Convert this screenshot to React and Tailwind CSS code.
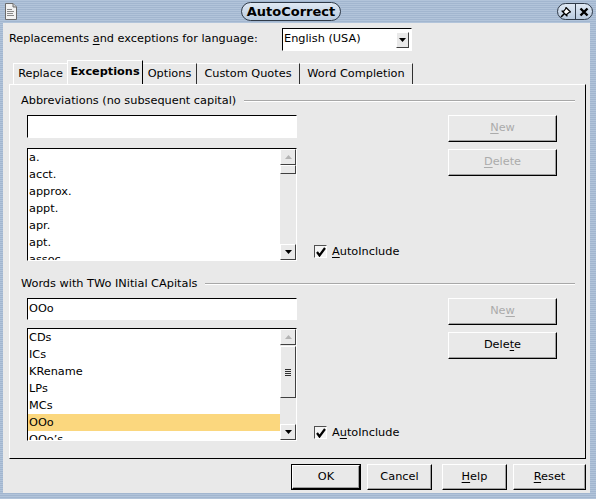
import React from 'react';

// Mnemonic letter, underlined like a Qt accelerator
function Mn({ children }) {
  return <span className="underline underline-offset-[2px] decoration-1">{children}</span>;
}

function Btn({ children, disabled, className = '' }) {
  return (
    <div
      className={`flex items-center justify-center border border-t-white border-l-white border-b-black border-r-black bg-[#e9e9e9] shadow-[inset_-1px_-1px_0_#a0a0a0] ${
        disabled ? 'text-[#ababab]' : 'text-black'
      } ${className}`}
    >
      {children}
    </div>
  );
}

function Arrow({ up, disabled }) {
  return (
    <svg width="7" height="4" viewBox="0 0 7 4">
      <path
        d={up ? 'M0 4 L3.5 0 L7 4 Z' : 'M0 0 L7 0 L3.5 4 Z'}
        fill={disabled ? '#b4b4b4' : '#000'}
      />
    </svg>
  );
}

function ScrollBtn({ up, disabled }) {
  return (
    <div className="h-[16px] shrink-0 flex items-center justify-center border border-t-white border-l-white border-b-[#404040] border-r-[#404040] bg-[#e9e9e9]">
      <Arrow up={up} disabled={disabled} />
    </div>
  );
}

function ListBox({ items, selected, before, thumb, grip }) {
  return (
    <div className="w-[270px] h-[113px] flex border border-t-black border-l-black border-b-white border-r-white bg-white overflow-hidden">
      <div className="flex-1 flex flex-col overflow-hidden">
        {items.map((it) => (
          <div
            key={it}
            className={`h-[17px] shrink-0 leading-[17px] pl-[1px] ${it === selected ? 'bg-[#fbd77e]' : ''}`}
          >
            {it}
          </div>
        ))}
      </div>
      <div className="w-[16px] flex flex-col bg-[#e9e9e9]">
        <ScrollBtn up disabled />
        <div style={{ height: before }} />
        <div
          style={{ height: thumb }}
          className="shrink-0 flex items-center justify-center border border-t-white border-l-white border-b-[#404040] border-r-[#404040]"
        >
          {grip && (
            <div className="flex flex-col gap-[1px]">
              <div className="w-[6px] h-px bg-[#303030]" />
              <div className="w-[6px] h-px bg-[#303030]" />
              <div className="w-[6px] h-px bg-[#303030]" />
              <div className="w-[6px] h-px bg-[#303030]" />
            </div>
          )}
        </div>
        <div className="flex-1" />
        <ScrollBtn />
      </div>
    </div>
  );
}

function Check({ label }) {
  return (
    <div className="flex items-center gap-[5px] h-[13px] leading-[13px]">
      <div className="w-[13px] h-[13px] border border-t-[#505050] border-l-[#505050] border-b-white border-r-white bg-[#f4f4f4] flex items-center justify-center">
        <svg width="10" height="10" viewBox="0 0 10 10">
          <path d="M1 5 L3.5 8.5 L9 1" fill="none" stroke="#000" strokeWidth="2.2" />
        </svg>
      </div>
      <span>{label}</span>
    </div>
  );
}

function Heading({ children }) {
  return (
    <div className="h-[16px] flex items-center ml-[11px] mr-[10px]">
      <span>{children}</span>
      <div className="flex-1 ml-[8px] border-t border-t-[#a8a8a8] border-b border-b-white" />
    </div>
  );
}

function Section({ title, value, items, selected, before, thumb, grip, newBtn, delBtn, delDisabled, check, mt, inputH, listMt, padB }) {
  return (
    <div className={mt}>
      <Heading>{title}</Heading>
      <div className="flex mt-[6px]">
        <div className="ml-[17px] w-[270px] flex flex-col">
          <div className={`${inputH} flex items-center border border-t-black border-l-black border-b-white border-r-white bg-white pl-[1px]`}>
            {value}
          </div>
          <div className={listMt}>
            <ListBox items={items} selected={selected} before={before} thumb={thumb} grip={grip} />
          </div>
        </div>
        <div className={`ml-[17px] w-[134px] flex flex-col justify-end ${padB}`}>
          <Check label={check} />
        </div>
        <div className="w-[109px] flex flex-col">
          <Btn disabled className="h-[27px]">{newBtn}</Btn>
          <Btn disabled={delDisabled} className="h-[27px] mt-[7px]">{delBtn}</Btn>
        </div>
      </div>
    </div>
  );
}

function TitleBar() {
  return (
    <div className="h-[23px] flex items-center px-[5px]">
      <svg width="12" height="17" viewBox="0 0 12 17">
        <path d="M0.5 0.5 H8 L11.5 4 V16.5 H0.5 Z" fill="#f2f2f2" stroke="#6b6b6b" />
        <path d="M8 0.5 V4 H11.5" fill="#d0d0d0" stroke="#6b6b6b" />
        <rect x="2" y="6" width="5" height="1" fill="#8a8a8a" />
        <rect x="2" y="8" width="7" height="1" fill="#8a8a8a" />
        <rect x="2" y="10" width="6" height="1" fill="#8a8a8a" />
        <rect x="2" y="12" width="7" height="1" fill="#8a8a8a" />
      </svg>
      <div className="flex-1 flex justify-center">
        <div className="h-[19px] w-[100px] ml-[8px] rounded-full border border-[#2f3a48] bg-[linear-gradient(to_bottom,#dfe8f3,#b9cbe0)] flex items-center justify-center font-bold text-[13px] text-black">
          AutoCorrect
        </div>
      </div>
      <div className="h-[17px] w-[36px] mr-[-2px] flex rounded-full border border-[#2f3a48] bg-[linear-gradient(to_bottom,#dfe8f3,#b9cbe0)] overflow-hidden">
        <div className="flex-1 flex items-center justify-center border-r border-r-[#2f3a48]">
          <svg width="12" height="12" viewBox="0 0 12 12">
            <path d="M6 1.5 L10.5 6 L9 6.5 L6.8 8.2 L7 10 L2 5 L3.8 5.2 L5.5 3 Z" fill="#fff" stroke="#000" strokeWidth="1.2" strokeLinejoin="round" />
            <path d="M4.3 7.7 L1 11" stroke="#000" strokeWidth="1.6" />
          </svg>
        </div>
        <div className="flex-1 flex items-center justify-center">
          <svg width="10" height="10" viewBox="0 0 10 10">
            <path d="M1.5 1.5 L8.5 8.5 M8.5 1.5 L1.5 8.5" stroke="#000" strokeWidth="2.4" />
          </svg>
        </div>
      </div>
    </div>
  );
}

const tabBase = 'h-[21px] shrink-0 whitespace-nowrap flex items-center justify-center border-t border-t-white';

export default function App() {
  return (
    <div className="w-[596px] h-[499px] flex flex-col overflow-hidden text-[11.3px] text-black font-['DejaVu_Sans','Liberation_Sans',sans-serif] bg-[repeating-linear-gradient(to_bottom,#b2c4da_0px,#b2c4da_1px,#a2b6cf_1px,#a2b6cf_2px)]">
      <TitleBar />
      <div className="flex-1 ml-[3px] mr-[6px] mb-[6px] bg-[#e9e9e9] flex flex-col">
        {/* language picker */}
        <div className="mt-[5px] h-[23px] flex items-center">
          <span className="pl-[6px] w-[279px]">
            Replacements <Mn>a</Mn>nd exceptions for language:
          </span>
          <div className="w-[130px] h-[23px] flex items-center border border-t-black border-l-black border-b-white border-r-white bg-white">
            <span className="flex-1 pl-[1px]">English (USA)</span>
            <div className="w-[13px] h-[16px] mr-[2px] flex items-center justify-center border border-t-white border-l-white border-b-[#404040] border-r-[#404040] bg-[#e9e9e9]">
              <Arrow />
            </div>
          </div>
        </div>

        {/* tabs */}
        <div className="mt-[9px] ml-[6px] h-[24px] flex items-end">
          <div className={`${tabBase} ml-[4px] border-l border-l-white w-[54px]`}>Replace</div>
          <div className="h-[24px] shrink-0 whitespace-nowrap flex items-center justify-center w-[76px] border-t border-l border-t-white border-l-white border-r border-r-black bg-[#e9e9e9] font-bold">
            Exceptions
          </div>
          <div className={`${tabBase} w-[54px] border-r border-r-[#303030]`}>Options</div>
          <div className={`${tabBase} w-[103px] border-r border-r-[#303030]`}>Custom Quotes</div>
          <div className={`${tabBase} w-[113px] border-r border-r-[#303030]`}>Word Completion</div>
        </div>

        {/* tab page */}
        <div className="ml-[6px] w-[577px] h-[375px] border border-t-white border-l-white border-b-black border-r-black">
          <Section
            mt="mt-[8px]"
            title="Abbreviations (no subsequent capital)"
            value=""
            items={['a.', 'acct.', 'approx.', 'appt.', 'apr.', 'apt.', 'assoc.']}
            before={0}
            thumb={9}
            newBtn={<><Mn>N</Mn>ew</>}
            delBtn={<><Mn>D</Mn>elete</>}
            delDisabled
            check={<><Mn>A</Mn>utoInclude</>}
            inputH="h-[23px]"
            listMt="mt-[10px]"
            padB="pb-[3px]"
          />
          <Section
            mt="mt-[15px]"
            title="Words with TWo INitial CApitals"
            value="OOo"
            items={['CDs', 'ICs', 'KRename', 'LPs', 'MCs', 'OOo', 'OOo\u2019s']}
            selected="OOo"
            before={1}
            thumb={52}
            grip
            newBtn={<>Ne<Mn>w</Mn></>}
            delBtn={<>Dele<Mn>t</Mn>e</>}
            check={<>A<Mn>u</Mn>toInclude</>}
            inputH="h-[22px]"
            listMt="mt-[8px]"
            padB="pb-[2px]"
          />
        </div>

        {/* dialog buttons */}
        <div className="mt-[5px] flex h-[26px]">
          <div className="ml-[288px] w-[70px] border border-black flex">
            <Btn className="flex-1">OK</Btn>
          </div>
          <Btn className="ml-[6px] w-[65px]">Cancel</Btn>
          <Btn className="ml-[10px] w-[65px]"><span><Mn>H</Mn>elp</span></Btn>
          <Btn className="ml-[6px] w-[73px]"><span><Mn>R</Mn>eset</span></Btn>
        </div>
      </div>
    </div>
  );
}
